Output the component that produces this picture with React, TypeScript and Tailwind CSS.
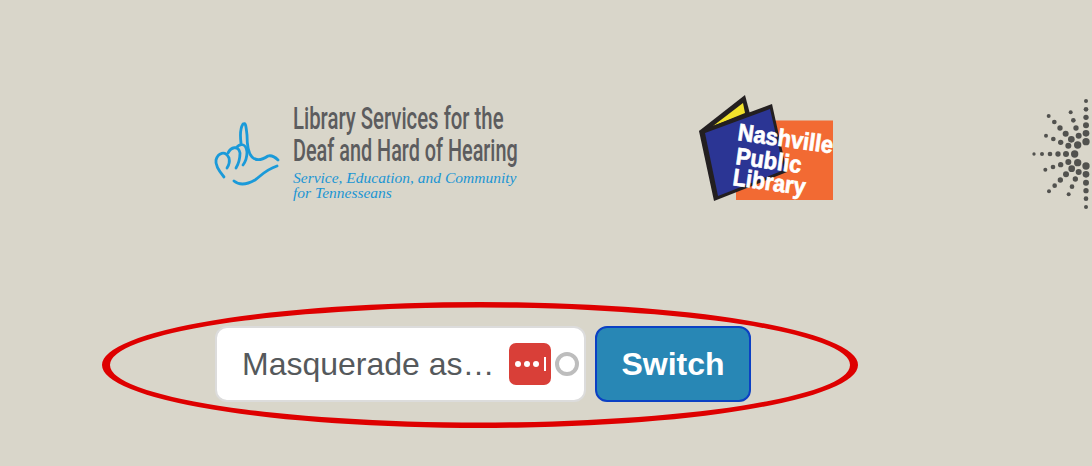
const burst: [number, number, number][] = [
  [198, 33, 6], [198, 58, 7], [198, 82, 8], [198, 106, 9], [198, 130, 10], [198, 155, 11],
  [198, 228, 11], [198, 253, 10], [198, 278, 9], [198, 302, 8], [198, 326, 7], [198, 351, 6],
  [152, 67, 6], [160, 91, 7], [168, 114, 8], [176, 137, 9], [173, 165, 11],
  [86, 78, 6], [103, 96, 7], [120, 114, 8], [137, 131, 9], [154, 148, 10],
  [78, 137, 6], [100, 147, 7], [122, 157, 8], [145, 167, 9],
  [42, 192, 5], [66, 192, 6], [90, 192, 7], [114, 192, 8], [138, 192, 9], [164, 192, 11],
  [76, 239, 6], [99, 231, 7], [122, 224, 8], [145, 216, 9], [173, 218, 11],
  [87, 304, 6], [104, 287, 7], [121, 270, 8], [138, 253, 9], [155, 236, 10],
  [146, 313, 6], [156, 290, 7], [166, 267, 8], [176, 246, 9],
];

const HandIcon = () => (
  <svg viewBox="0 0 80 80" className="h-20 w-20 shrink-0" fill="none" stroke="#1a9ad9" strokeWidth="2.8" strokeLinecap="round" strokeLinejoin="round">
    <path d="M31 28C30 20 31 12 33 9C36 7 36 12 37 20C37 30 38 38 42 42C46 46 52 45 58 41C62 40 66 43 68 45" />
    <path d="M14 62C9 56 5 50 6 45C8 38 15 35 19 43C20 47 19 50 17 53" />
    <path d="M18 38C21 32 28 30 30 38C30 43 29 48 26 53" />
    <path d="M26 33C30 28 36 28 37 37C37 42 36 46 33 50" />
    <path d="M24 66C30 71 38 69 45 65C51 61 55 55 67 51" />
  </svg>
);

const NashvilleLogo = () => (
  <svg viewBox="0 0 150 120" className="h-[120px] w-[150px] shrink-0 overflow-visible">
    <rect x="46" y="30.5" width="97" height="79.5" fill="#f26a33" />
    <path d="M9 41L55 5L60 24L30 40Z" fill="#231f20" />
    <path d="M23 36L53 13L55 23Z" fill="#f2e32b" />
    <path d="M9 41L82 14L97 82L24 111Z" fill="#231f20" />
    <path d="M15 43L80 19L94 80L28 106Z" fill="#2b3594" />
    <g fill="#fff" stroke="#fff" strokeWidth="0.7" className="font-['Liberation_Sans',sans-serif] font-bold" fontSize="24">
      <text x="47" y="50" transform="rotate(8 47 50)" textLength="96" lengthAdjust="spacingAndGlyphs">Nashville</text>
      <text x="45" y="74" transform="rotate(8 45 74)" textLength="66" lengthAdjust="spacingAndGlyphs">Public</text>
      <text x="42" y="95" transform="rotate(8 42 95)" textLength="73" lengthAdjust="spacingAndGlyphs">Library</text>
    </g>
  </svg>
);

const Starburst = () => (
  <svg viewBox="0 0 216 375" className="h-[125px] w-[72px] shrink-0" fill="#52524f">
    {burst.map(([cx, cy, r], i) => (
      <circle key={i} cx={cx} cy={cy} r={r} />
    ))}
  </svg>
);

const LastPassIcon = () => (
  <div className="flex h-[42px] w-[42px] shrink-0 items-center justify-center gap-[3px] rounded-[7px] bg-[#d93f38]">
    <span className="h-[6px] w-[6px] rounded-full bg-white" />
    <span className="h-[6px] w-[6px] rounded-full bg-white" />
    <span className="h-[6px] w-[6px] rounded-full bg-white" />
    <span className="ml-[2px] h-[14px] w-[2px] bg-white" />
  </div>
);

export default function App() {
  return (
    <main className="relative h-[466px] w-[1092px] overflow-hidden bg-[#d9d6ca] font-['Liberation_Sans',sans-serif]">
      <div className="flex h-[326px] items-start pt-[90px]">
        <div className="ml-[210px] mt-[25px]">
          <HandIcon />
        </div>
        <div className="ml-[3px] mt-[13px] w-[230px]">
          <p className="w-[340px] origin-left scale-x-[0.656] whitespace-nowrap font-['Roboto',sans-serif] text-[31px] font-medium leading-[32px] text-[#5c5c5e]">
            Library Services for the
          </p>
          <p className="w-[350px] origin-left scale-x-[0.64] whitespace-nowrap font-['Roboto',sans-serif] text-[31px] font-medium leading-[31px] text-[#5c5c5e]">
            Deaf and Hard of Hearing
          </p>
          <p className="mt-[4px] whitespace-nowrap font-['Liberation_Serif',serif] text-[15.5px] italic leading-[15px] text-[#1b95d3]">
            Service, Education, and Community
          </p>
          <p className="whitespace-nowrap font-['Liberation_Serif',serif] text-[15.5px] italic leading-[15px] text-[#1b95d3]">
            for Tennesseans
          </p>
        </div>
        <div className="ml-[167px]">
          <NashvilleLogo />
        </div>
        <div className="ml-[180px]">
          <Starburst />
        </div>
      </div>

      <form className="ml-[215px] flex gap-[9px]">
        <div className="flex h-[76px] w-[371px] items-center rounded-[12px] border-2 border-[#dcdcdc] bg-white pl-[25px]">
          <span className="w-[267px] whitespace-nowrap text-[32px] text-[#55595c]">Masquerade as…</span>
          <LastPassIcon />
          <span className="ml-[4px] h-[24px] w-[24px] rounded-full border-[4px] border-[#bdbdbd]" />
        </div>
        <button type="button" className="h-[76px] w-[156px] rounded-[12px] border-2 border-[#0b40c4] bg-[#2887b5] text-[32px] font-bold text-white">
          Switch
        </button>
      </form>

      <svg viewBox="0 0 1092 466" className="pointer-events-none absolute inset-0 h-[466px] w-[1092px]">
        <path
          fillRule="evenodd"
          fill="#de0000"
          d="M102 365a378 63 0 1 0 756 0a378 63 0 1 0 -756 0ZM110 365a370 57.5 0 1 0 740 0a370 57.5 0 1 0 -740 0Z"
        />
      </svg>
    </main>
  );
}
